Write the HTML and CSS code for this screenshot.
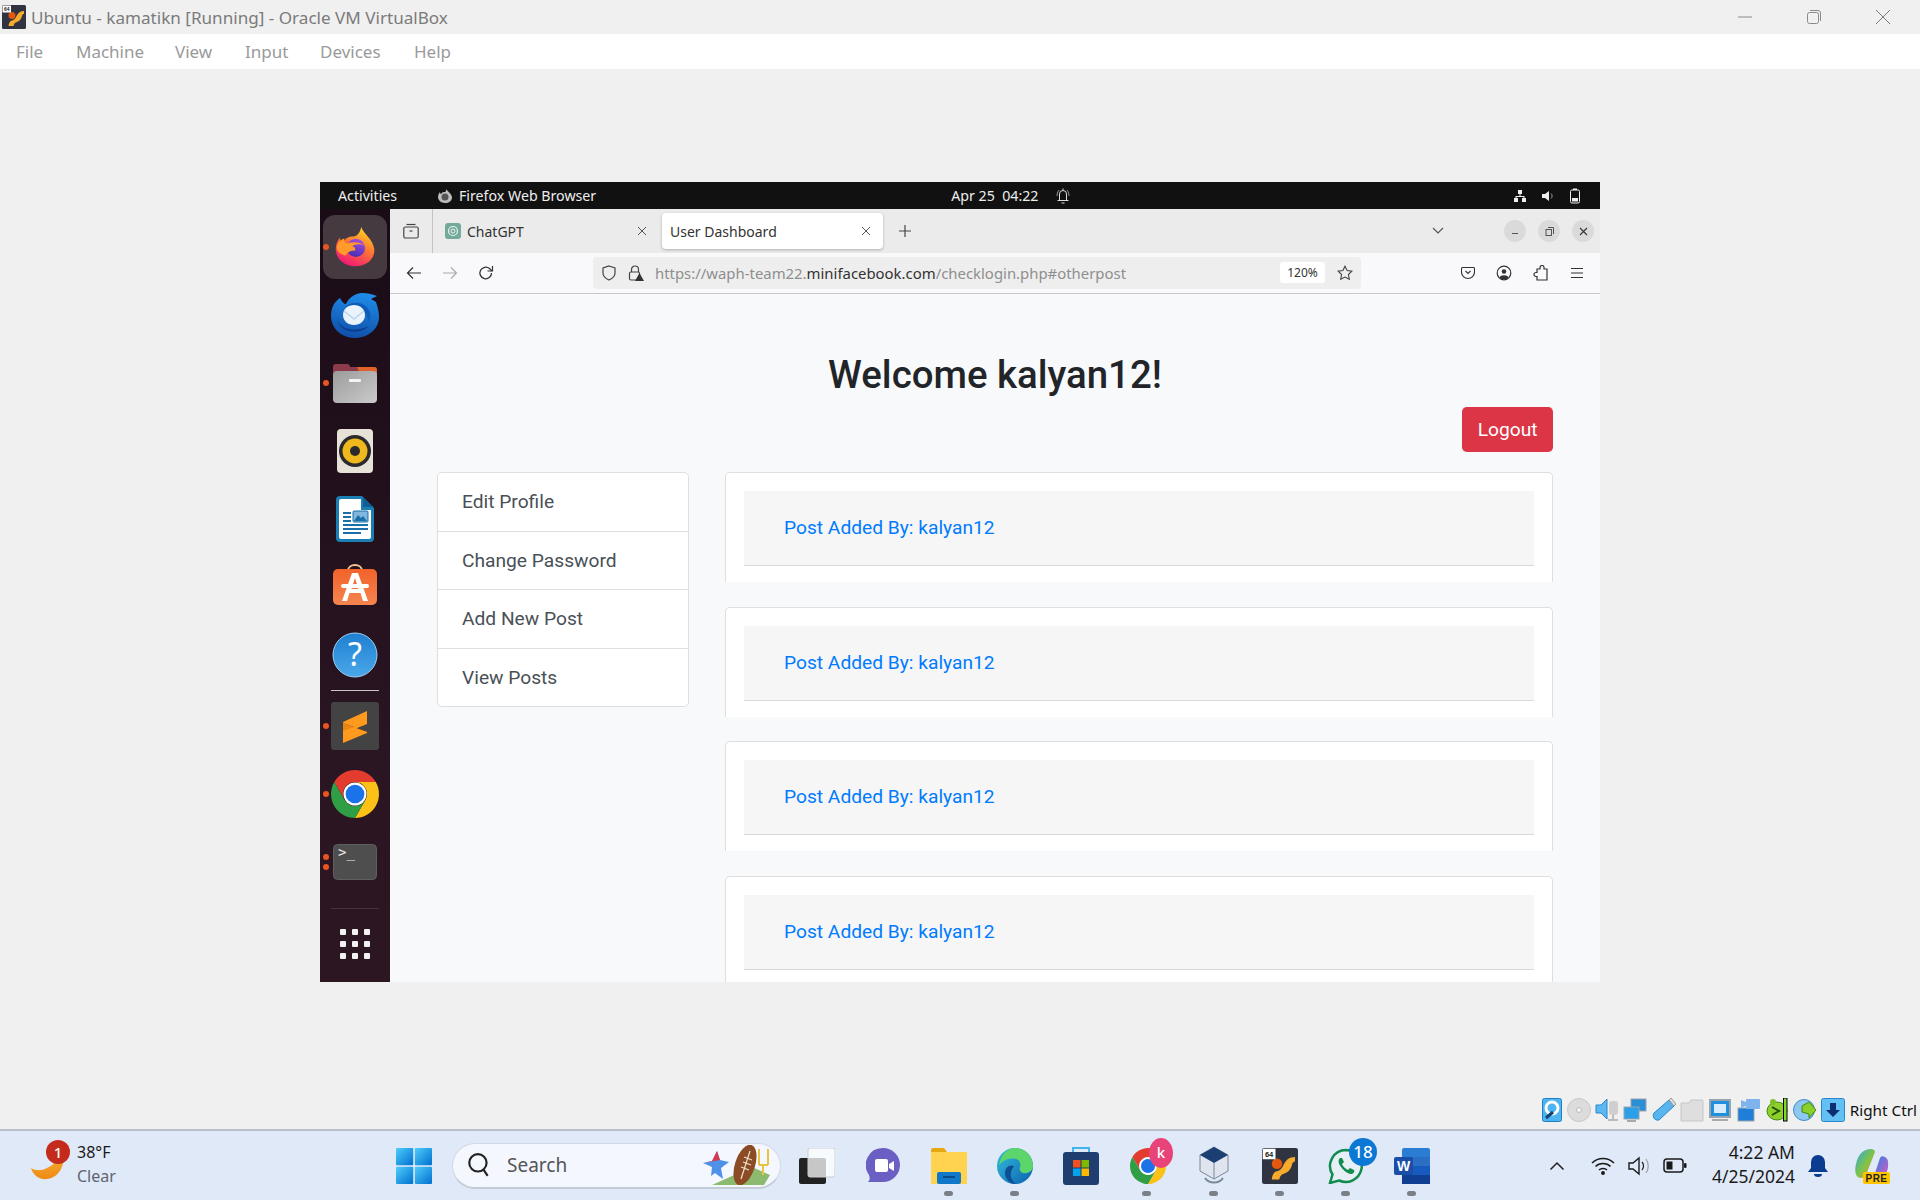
FILE: index.html
```html
<!DOCTYPE html>
<html lang="en">
<head>
  <meta charset="UTF-8">
  <title>Ubuntu - kamatikn [Running] - Oracle VM VirtualBox</title>
  <link rel="stylesheet" href="styles.css">
</head>
<body>
  <!-- shared gradients and icons -->
  <svg class="defs" aria-hidden="true">
    <defs>
      <linearGradient id="ffBody" x1="0.8" y1="0" x2="0.3" y2="1">
        <stop offset="0" stop-color="#ffe226"/><stop offset="0.45" stop-color="#ff7a2e"/><stop offset="1" stop-color="#f0147a"/>
      </linearGradient>
      <linearGradient id="ffInner" x1="0.7" y1="0" x2="0.3" y2="1">
        <stop offset="0" stop-color="#a94de0"/><stop offset="1" stop-color="#3f2db0"/>
      </linearGradient>
      <linearGradient id="tbBody" x1="0.6" y1="0" x2="0.4" y2="1">
        <stop offset="0" stop-color="#1f8ce8"/><stop offset="1" stop-color="#0f4fa8"/>
      </linearGradient>
      <linearGradient id="grayBox" x1="0" y1="0" x2="1" y2="1">
        <stop offset="0" stop-color="#9b9b9b"/><stop offset="1" stop-color="#cbcbcb"/>
      </linearGradient>
      <linearGradient id="bagOrange" x1="0" y1="0" x2="0" y2="1">
        <stop offset="0" stop-color="#f2622a"/><stop offset="1" stop-color="#f58550"/>
      </linearGradient>
      <linearGradient id="helpBlue" x1="0" y1="0" x2="0" y2="1">
        <stop offset="0" stop-color="#1f7fd0"/><stop offset="1" stop-color="#4aa8ea"/>
      </linearGradient>
      <linearGradient id="winBlue" x1="0" y1="0" x2="1" y2="1">
        <stop offset="0" stop-color="#4fcdfb"/><stop offset="1" stop-color="#0070d0"/>
      </linearGradient>
      <linearGradient id="edgeBlue" x1="0" y1="0" x2="1" y2="1">
        <stop offset="0" stop-color="#33c3dc"/><stop offset="1" stop-color="#0c5fb0"/>
      </linearGradient>
      <linearGradient id="moonGold" x1="0" y1="0" x2="0" y2="1">
        <stop offset="0" stop-color="#f8b93a"/><stop offset="1" stop-color="#ee8a16"/>
      </linearGradient>
      <linearGradient id="copilot" x1="0" y1="0" x2="1" y2="1">
        <stop offset="0" stop-color="#2aa5e8"/><stop offset="0.5" stop-color="#7cc34a"/><stop offset="1" stop-color="#e7a02f"/>
      </linearGradient>
      <linearGradient id="copilot2" x1="0" y1="0" x2="1" y2="1">
        <stop offset="0" stop-color="#2f7fe8"/><stop offset="1" stop-color="#d85bc0"/>
      </linearGradient>
      <symbol id="chrome" viewBox="4 4 40 40">
        <path fill="#e33b2e" d="M6.7 14A20 20 0 0 1 41.3 14H24a10 10 0 0 0-8.66 15Z"/>
        <path fill="#fbc116" d="M41.3 14H24a10 10 0 0 1 8.66 15L24 44A20 20 0 0 0 41.3 14Z"/>
        <path fill="#2f9e44" d="M6.7 14A20 20 0 0 0 24 44l8.66-15a10 10 0 0 1-17.32 0Z"/>
        <circle cx="24" cy="24" r="9.6" fill="#fff"/>
        <circle cx="24" cy="24" r="7.8" fill="#1a73e8"/>
      </symbol>
      <symbol id="ffox" viewBox="0 0 48 48">
        <path fill="url(#ffBody)" d="M31 1c3 8 13 13 15 25 1 12-9 20-22 20C11 46 2 37 2 26c0-5 2-10 5-13 0 3 1 5 3 6 2-4 6-7 11-7 5 0 9-4 10-11Z"/>
        <circle cx="25" cy="25" r="10.500" fill="url(#ffInner)"/>
        <path fill="#ff9a2b" d="M3 25c1-6 4-9 9-11-1 3 0 5 3 6 6-2 14-2 20 2-5-2-11-1-14 1 3 1 4 3 3 5-5 0-9 2-11 6-5-2-9-4-10-9Z"/>
      </symbol>
      <symbol id="vbox" viewBox="0 0 48 48">
        <rect width="48" height="48" rx="3" fill="#2f3440"/>
        <path fill="#f7ab2c" d="M44 12c-8 0-12 4-15 10-2 5-5 8-9 9-4 1-6 4-7 11h10c1-5 3-7 7-8 6-2 9-7 10-12 1-3 2-4 4-4Z"/>
        <circle cx="20" cy="21" r="7" fill="#e4570f"/>
        <rect x="1" y="1" width="17" height="14" fill="#fff"/>
        <text x="9.5" y="12" class="svg-64">64</text>
      </symbol>
    </defs>
  </svg>

  <header class="titlebar">
    <svg class="titlebar-icon" width="24" height="24"><use href="#vbox"/></svg>
    <span class="titlebar-text">Ubuntu - kamatikn [Running] - Oracle VM VirtualBox</span>
    <div class="winctl">
      <svg width="16" height="16" viewBox="0 0 16 16"><path d="M1 8h14" stroke="#8a8a8a"/></svg>
      <svg width="16" height="16" viewBox="0 0 16 16" fill="none" stroke="#8a8a8a"><rect x="1.5" y="3.5" width="11" height="11" rx="2"/><path d="M4 1.5h8a2.500 2.500 0 0 1 2.500 2.500v8"/></svg>
      <svg width="16" height="16" viewBox="0 0 16 16"><path d="M1 1l14 14M15 1L1 15" stroke="#7a7a7a"/></svg>
    </div>
  </header>

  <nav class="menubar">
    <span class="m-file">File</span><span class="m-machine">Machine</span><span class="m-view">View</span><span class="m-input">Input</span><span class="m-devices">Devices</span><span>Help</span>
  </nav>

  <main class="host">
    <section class="vm">
      <div class="gnome-bar">
        <span class="gnome-activities">Activities</span>
        <svg class="gnome-ff" width="16" height="16" viewBox="0 0 16 16"><path fill="#bdbdbd" d="M9 1c1 2 5 4 6 8 0 4-3 6-7 6-4 0-7-3-7-6 0-2 1-4 2-5 0 1 .5 2 1 2 1-2 3-2 4-2 1 0 1-2 1-3Z"/><circle cx="8" cy="9" r="3.500" fill="#555"/></svg>
        <span class="gnome-app">Firefox Web Browser</span>
        <span class="gnome-clock">Apr 25&nbsp; 04:22</span>
        <svg class="gnome-bell" width="14" height="16" viewBox="0 0 14 16" fill="none" stroke="#ddd"><path d="M3.500 12V6a3.500 3.500 0 0 1 7 0v6M1.500 12.500h11M5.500 15h3M7 0.500V2"/><path d="M1 8c0-2 .5-4 2-6M13 8c0-2-.5-4-2-6" stroke="#999"/></svg>
        <div class="gnome-tray">
          <svg width="14" height="14" viewBox="0 0 14 14" fill="#eee"><rect x="5" y="1" width="4" height="4"/><rect x="1" y="9" width="4" height="4"/><rect x="9" y="9" width="4" height="4"/><path d="M6.500 5h1v2H11.500v2h-1V8h-7v1h-1V7h4Z"/></svg>
          <svg width="14" height="14" viewBox="0 0 14 14" fill="#eee"><path d="M1 5h3l4-3v10L4 9H1Z"/><path d="M10 4.500c1.500 1.500 1.500 3.500 0 5" stroke="#999" fill="none"/></svg>
          <svg width="12" height="16" viewBox="0 0 12 16" fill="none"><rect x="1.500" y="2" width="9" height="13" rx="1.500" stroke="#eee"/><rect x="4" y="0.500" width="4" height="1.500" fill="#eee"/><rect x="3" y="10" width="6" height="3.500" fill="#eee"/></svg>
        </div>
      </div>

      <div class="vm-body">
        <aside class="dock">
          <div class="dock-item is-active">
            <span class="dock-dot"></span>
            <svg width="42" height="44"><use href="#ffox"/></svg>
          </div>
          <div class="dock-item">
            <svg width="48" height="46" viewBox="0 0 48 46">
              <path fill="url(#tbBody)" d="M9 6c2 4 4 6 6 6C18 5 25 1 31 1c5 0 10 1 15 3l-6 3 5 3c2 6 3 10 3 15 0 12-11 21-24 21C10 46 0 36 0 24 0 16 3 10 9 6Z"/>
              <path fill="#0c3f92" d="M6 27c3 10 17 14 32 7-9 9-29 8-32-7Z"/>
              <path fill="#0d5cb8" d="M14 15c7-6 18-6 23 2 3 4 3 9 1 14-1-9-8-16-15-17-4 0-7 0-9 1Z"/>
              <path fill="#eaf3fb" d="M12 23c0-6 5-10 11-10s11 4 11 10-5 10-11 10-11-4-11-10Z"/>
              <path fill="none" stroke="#bcd4ea" stroke-width="1.500" d="M13 19l10 8 10-8"/>
            </svg>
          </div>
          <div class="dock-item">
            <span class="dock-dot"></span>
            <svg width="44" height="40" viewBox="0 0 44 40">
              <path fill="#8d3a4b" d="M0 4a3 3 0 0 1 3-3h11a3 3 0 0 1 3 3h24a3 3 0 0 1 3 3v10H0Z"/>
              <path fill="#e2622b" d="M24 4h17a3 3 0 0 1 3 3v10H30Z"/>
              <rect y="8" width="44" height="32" rx="4" fill="url(#grayBox)"/>
              <rect x="16" y="16" width="12" height="3" rx="1" fill="#f4f4f4"/>
            </svg>
          </div>
          <div class="dock-item">
            <svg width="38" height="46" viewBox="0 0 38 46">
              <rect x="1" y="1" width="36" height="44" rx="4" fill="#e6e2d8"/>
              <circle cx="19" cy="23" r="16" fill="#2b2b2e"/>
              <circle cx="19" cy="23" r="12.500" fill="#efb81c"/>
              <circle cx="19" cy="23" r="5" fill="#2b2b2e"/>
            </svg>
          </div>
          <div class="dock-item">
            <svg width="38" height="46" viewBox="0 0 38 46">
              <path fill="#1b7fb4" d="M4 0h22l12 12v30a4 4 0 0 1-4 4H4a4 4 0 0 1-4-4V4a4 4 0 0 1 4-4Z"/>
              <path fill="#fff" d="M5 3h20v11h10v27a2 2 0 0 1-2 2H5a2 2 0 0 1-2-2V5a2 2 0 0 1 2-2Z"/>
              <path fill="#0e5f93" d="M27 1l10 10H27Z"/>
              <path stroke="#1b6fa8" stroke-width="2" d="M7 17h8M7 21h8M7 25h8M7 29h25M7 33h25M7 37h18"/>
              <rect x="17" y="15" width="15" height="11" rx="1" fill="#7fb7dd" stroke="#1b6fa8"/>
              <path fill="#1b6fa8" d="M18 25l4-6 3 3 2-2 4 5Z"/>
            </svg>
          </div>
          <div class="dock-item">
            <svg width="44" height="46" viewBox="0 0 44 46">
              <path fill="none" stroke="#f2c792" stroke-width="2" d="M15 7c0-8 14-8 14 0"/>
              <rect y="5" width="44" height="36" rx="5" fill="url(#bagOrange)"/>
              <path fill="#fff" d="M19 9h6l10 28h-5l-2.500-8H16.500L14 37H9Zm3 5-3.500 11h7Z"/>
              <rect x="8" y="20" width="28" height="4" rx="2" fill="#fff"/>
            </svg>
          </div>
          <div class="dock-item">
            <svg width="46" height="46" viewBox="0 0 46 46">
              <circle cx="23" cy="23" r="22" fill="url(#helpBlue)" stroke="#9fd0f3"/>
              <text x="23" y="34" class="svg-help">?</text>
            </svg>
          </div>
          <div class="dock-sep"></div>
          <div class="dock-item">
            <span class="dock-dot"></span>
            <svg width="48" height="48" viewBox="0 0 48 48">
              <rect width="48" height="48" rx="3" fill="#434343"/>
              <path fill="#e8860f" d="M12 21l24 9v1L12 29Z"/>
              <path fill="#ff9a1f" d="M12 20 36 9V22L25 26.500 36 30V31L12 41V29L23 25 12 21Z"/>
            </svg>
          </div>
          <div class="dock-item">
            <span class="dock-dot"></span>
            <svg width="48" height="48"><use href="#chrome"/></svg>
          </div>
          <div class="dock-item">
            <span class="dock-dot dock-dot-a"></span><span class="dock-dot dock-dot-b"></span>
            <svg width="44" height="36" viewBox="0 0 44 36">
              <rect x=".5" y=".5" width="43" height="35" rx="4" fill="#4e4e4e" stroke="#5f5f5f"/>
              <text x="5" y="13" class="svg-term">&gt;_</text>
            </svg>
          </div>
          <div class="dock-sep dock-sep-dim"></div>
          <div class="dock-item">
            <div class="apps-grid"><i></i><i></i><i></i><i></i><i></i><i></i><i></i><i></i><i></i></div>
          </div>
        </aside>

        <div class="firefox">
          <div class="tabbar">
            <div class="ff-view">
              <svg width="16" height="16" viewBox="0 0 16 16" fill="none" stroke="#444" stroke-width="1.200"><path d="M3.500 1.500h9"/><rect x="0.800" y="4" width="14.400" height="11" rx="1.500"/><path d="M6.500 8h3"/></svg>
            </div>
            <div class="tab">
              <svg class="tab-favicon" width="16" height="16" viewBox="0 0 16 16"><rect width="16" height="16" rx="3" fill="#74aa9c"/><circle cx="8" cy="8" r="4.500" fill="none" stroke="#e9f3f0" stroke-width="1.200"/><circle cx="8" cy="8" r="2" fill="none" stroke="#e9f3f0"/></svg>
              <span class="tab-title">ChatGPT</span>
              <svg class="tab-close" width="10" height="10" viewBox="0 0 10 10"><path d="M1 1l8 8M9 1L1 9" stroke="#555"/></svg>
            </div>
            <div class="tab tab-active">
              <span class="tab-title">User Dashboard</span>
              <svg class="tab-close" width="10" height="10" viewBox="0 0 10 10"><path d="M1 1l8 8M9 1L1 9" stroke="#555"/></svg>
            </div>
            <svg class="tab-new" width="12" height="12" viewBox="0 0 12 12"><path d="M6 0v12M0 6h12" stroke="#444" stroke-width="1.200"/></svg>
            <svg class="tab-list" width="12" height="8" viewBox="0 0 12 8"><path d="M1 1l5 5 5-5" fill="none" stroke="#555" stroke-width="1.200"/></svg>
            <div class="csd">
              <span><svg width="8" height="8" viewBox="0 0 8 8"><path d="M1 6.500h6" stroke="#555"/></svg></span>
              <span><svg width="9" height="9" viewBox="0 0 9 9" fill="none" stroke="#555"><rect x="1" y="2.500" width="5.500" height="6"/><path d="M3 .500h5.500V7"/></svg></span>
              <span><svg width="9" height="9" viewBox="0 0 9 9"><path d="M1 1l7 7M8 1L1 8" stroke="#333" stroke-width="1.100"/></svg></span>
            </div>
          </div>

          <div class="toolbar">
            <svg class="tb-back" width="16" height="16" viewBox="0 0 16 16" fill="none" stroke="#333" stroke-width="1.200"><path d="M15 8H1.500M7 2.500 1.500 8 7 13.500"/></svg>
            <svg class="tb-fwd" width="16" height="16" viewBox="0 0 16 16" fill="none" stroke="#aaa" stroke-width="1.200"><path d="M1 8h13.500M9 2.500 14.500 8 9 13.500"/></svg>
            <svg class="tb-reload" width="16" height="16" viewBox="0 0 16 16" fill="none" stroke="#333" stroke-width="1.300"><path d="M13.500 8a5.800 5.800 0 1 1-2-4.400L14 6"/><path d="M14.500 1v5h-5" stroke-width="1.200"/></svg>
            <div class="urlbar">
              <svg width="16" height="16" viewBox="0 0 16 16" fill="none" stroke="#444" stroke-width="1.200"><path d="M8 1l6 2v5c0 3-2.500 5.500-6 7-3.500-1.500-6-4-6-7V3Z"/></svg>
              <svg class="url-lock" width="16" height="16" viewBox="0 0 16 16"><path d="M3.500 7V4.500a3.500 3.500 0 0 1 7 0V7" fill="none" stroke="#444" stroke-width="1.200"/><rect x="1.500" y="7" width="10" height="8" rx="1.500" fill="none" stroke="#444" stroke-width="1.200"/><path d="M11.500 8l4.500 8H7Z" fill="#333"/></svg>
              <span class="url-text">https://waph-team22.<b>minifacebook.com</b>/checklogin.php#otherpost</span>
              <span class="url-zoom">120%</span>
              <svg class="url-star" width="16" height="16" viewBox="0 0 16 16"><path d="M8 1.200l2.100 4.400 4.700.6-3.400 3.300.9 4.800L8 12l-4.300 2.300.9-4.800L1.200 6.200l4.700-.6Z" fill="none" stroke="#444" stroke-width="1.100"/></svg>
            </div>
            <div class="tb-right">
              <svg width="14" height="14" viewBox="0 0 14 14" fill="none" stroke="#333" stroke-width="1.100"><path d="M1.500 1.500h11a1 1 0 0 1 1 1V6a6.500 6.500 0 0 1-13 0V2.500a1 1 0 0 1 1-1Z"/><path d="M4.500 5 7 7.500 9.500 5"/></svg>
              <svg width="16" height="16" viewBox="0 0 16 16"><circle cx="8" cy="8" r="6.800" fill="none" stroke="#333" stroke-width="1.200"/><circle cx="8" cy="6.500" r="2.300" fill="#333"/><path d="M3.500 12.500c1-3 8-3 9 0a6 6 0 0 1-9 0Z" fill="#333"/></svg>
              <svg width="16" height="16" viewBox="0 0 16 16" fill="none" stroke="#333" stroke-width="1.200"><path d="M7 4V2.500a2 2 0 0 1 4 0V4h3v11H4v-3.500H3a2 2 0 0 1 0-4h1V4Z"/></svg>
              <svg width="14" height="12" viewBox="0 0 14 12"><path d="M1 1.500h12M1 6h12M1 10.500h12" stroke="#333" stroke-width="1.200"/></svg>
            </div>
          </div>

          <div class="dashboard">
            <h1 class="welcome">Welcome kalyan12!</h1>
            <div class="logout-row"><a class="btn-logout">Logout</a></div>
            <div class="dash-row">
              <ul class="side-list">
                <li>Edit Profile</li>
                <li>Change Password</li>
                <li>Add New Post</li>
                <li>View Posts</li>
              </ul>
              <div class="posts">
                <article class="post"><div class="post-header">Post Added By: kalyan12</div></article>
                <article class="post"><div class="post-header">Post Added By: kalyan12</div></article>
                <article class="post"><div class="post-header">Post Added By: kalyan12</div></article>
                <article class="post"><div class="post-header">Post Added By: kalyan12</div></article>
              </div>
            </div>
          </div>
        </div>
      </div>
    </section>

    <div class="statusbar">
      <svg width="20" height="24" viewBox="0 0 20 24"><rect x=".5" y=".5" width="19" height="23" rx="2" fill="#4db5ef" stroke="#1f7fc8"/><circle cx="10" cy="10" r="6" fill="none" stroke="#fff" stroke-width="3"/><path d="M4 20l7-6" stroke="#16406f" stroke-width="3"/></svg>
      <svg width="24" height="24" viewBox="0 0 24 24"><circle cx="12" cy="12" r="11.500" fill="#dcdcdc" stroke="#c8c8c8"/><circle cx="12" cy="12" r="2.500" fill="#f4f4f4" stroke="#bbb"/></svg>
      <svg width="24" height="24" viewBox="0 0 24 24"><path d="M1 7h5l6-6v20l-6-6H1Z" fill="#5cb8f0" stroke="#2a86c9"/><rect x="14" y="3" width="9" height="14" rx="3" fill="#cfcfcf"/><path d="M18 17v4M13 22h10" stroke="#bbb" stroke-width="2"/></svg>
      <svg width="24" height="24" viewBox="0 0 24 24"><rect x="8" y="1" width="15" height="12" fill="#2b8fd8" stroke="#9aa4ad"/><rect x="1" y="9" width="15" height="12" fill="#2b9fe8" stroke="#9aa4ad"/><path d="M4 23h9" stroke="#aaa" stroke-width="2"/></svg>
      <svg width="24" height="24" viewBox="0 0 24 24"><path d="M17 2 2 15c-2 3 0 8 5 7L22 8Z" fill="#58b5ee" stroke="#2a86c9"/><path d="M17 2l5 6 2-2-5-6Z" fill="#ddd" stroke="#999"/></svg>
      <svg width="24" height="24" viewBox="0 0 24 24"><path d="M1 23V5h8l2-3h11a1 1 0 0 1 1 1v20Z" fill="#dedede" stroke="#c6c6c6"/></svg>
      <svg width="24" height="24" viewBox="0 0 24 24"><rect x="1" y="1" width="22" height="19" fill="#99a4ad"/><rect x="3" y="3" width="18" height="15" fill="#1f8fde"/><rect x="6" y="6" width="12" height="9" fill="#d4ecfb"/><path d="M4 22h16" stroke="#aaa" stroke-width="2"/></svg>
      <svg width="24" height="24" viewBox="0 0 24 24"><rect x="1" y="10" width="16" height="13" fill="#1f7fd8" stroke="#99a4ad"/><rect x="9" y="1" width="14" height="10" rx="1" fill="#7eb3ee"/><path d="M9 4 4 2v8l5-2Z" fill="#7eb3ee"/></svg>
      <svg width="24" height="24" viewBox="0 0 24 24"><ellipse cx="12" cy="13" rx="10" ry="9" fill="#8fcf2a" stroke="#3f8a14"/><circle cx="8" cy="4" r="3" fill="#7fbf26"/><path d="M7 9l7 4-7 4" fill="none" stroke="#1f4f0a" stroke-width="2"/><rect x="18.500" y="0" width="3.500" height="23" fill="#82d82a" stroke="#000"/></svg>
      <svg width="24" height="24" viewBox="0 0 24 24"><circle cx="11" cy="12" r="10.500" fill="#8ec8ef" stroke="#3f8cc8"/><path d="M9 8l7-4 7 8-7 8v-4l-7-2Z" fill="#8bd02a" stroke="#3f8a14"/></svg>
      <svg width="24" height="24" viewBox="0 0 24 24"><rect x=".5" y=".5" width="23" height="23" rx="2" fill="#62c0f5" stroke="#2a86c9"/><path d="M9 5h6v7h4l-7 7-7-7h4Z" fill="#0e2f6f"/></svg>
      <span class="status-key">Right Ctrl</span>
    </div>
  </main>

  <footer class="taskbar">
    <div class="weather">
      <svg class="weather-icon" width="36" height="38" viewBox="0 0 36 38">
        <path fill="url(#moonGold)" d="M33 0c3 14-1 30-16 32C9 33 3 28 1 21c5 3 10 3 16 0C26 17 32 9 33 0Z"/>
        <circle cx="28" cy="5" r="12" fill="#c42b1c"/>
        <text x="28" y="11" class="svg-badge">1</text>
      </svg>
      <div class="weather-text"><span>38°F</span><span class="weather-sub">Clear</span></div>
    </div>

    <svg class="win-logo" width="36" height="36" viewBox="0 0 36 36"><rect width="17.200" height="17.200" rx="1" fill="url(#winBlue)"/><rect x="18.800" width="17.200" height="17.200" rx="1" fill="url(#winBlue)"/><rect y="18.800" width="17.200" height="17.200" rx="1" fill="url(#winBlue)"/><rect x="18.800" y="18.800" width="17.200" height="17.200" rx="1" fill="url(#winBlue)"/></svg>

    <div class="searchbox">
      <svg width="24" height="26" viewBox="0 0 22 24" fill="none" stroke="#222" stroke-width="2"><circle cx="10" cy="10" r="8"/><path d="M15 16l4 6"/></svg>
      <span class="search-label">Search</span>
      <svg class="search-art" width="74" height="40" viewBox="0 0 74 40">
        <path d="M1 18 10 16 15 6l3 9 9 2-8 6 2 11-8-6-4 3 1-9Z" fill="#4f90e8"/>
        <path d="M1 18 10 16 15 6l3 9Z" fill="#d5394a"/>
        <path d="M10 40 50 22l18 8-6 10Z" fill="#8cbb6f"/>
        <path d="M57 4v16M66 4v16M57 20h9M61 20v10" stroke="#e7c33f" stroke-width="2" fill="none"/>
        <ellipse cx="43" cy="20" rx="10" ry="21" transform="rotate(18 43 20)" fill="#8a4b25"/>
        <path d="M48 6 39 34M42 12l8 3M41 17l8 3M39 22l8 3" stroke="#f0e2cf" stroke-width="1.200"/>
      </svg>
    </div>

    <div class="task-icons">
      <div class="task-item">
        <svg width="36" height="36" viewBox="0 0 36 36"><rect y="10" width="27" height="26" rx="2" fill="#222"/><rect x="9" width="27" height="29" rx="2" fill="#fff" fill-opacity="0.75" stroke="#ccc"/></svg>
      </div>
      <div class="task-item">
        <svg width="34" height="36" viewBox="0 0 34 36"><path fill="#6b5fc4" d="M17 0a17 17 0 0 1 0 34H2c2-2 2-4 1-7A17 17 0 0 1 17 0Z"/><rect x="9" y="11" width="13" height="13" rx="2" fill="#fff"/><path d="M23 16l5-3v10l-5-3Z" fill="#fff"/></svg>
      </div>
      <div class="task-item has-pip">
        <svg width="36" height="36" viewBox="0 0 36 36"><path fill="#e3a90f" d="M0 2a2 2 0 0 1 2-2h11l3 4h20v10H0Z"/><rect y="4" width="36" height="32" fill="#ffd250"/><rect x="6" y="24" width="24" height="12" rx="2" fill="#0f78c8"/><rect x="12" y="28" width="12" height="2" fill="#0a4a8a"/></svg>
      </div>
      <div class="task-item has-pip">
        <svg width="36" height="36" viewBox="0 0 36 36"><circle cx="18" cy="18" r="18" fill="url(#edgeBlue)"/><path fill="#5cd66a" d="M36 18c0 5-5 8-10 7-3-1-4-4-3-6 1-3 0-7-4-8-7-2-14 2-17 6C4 7 10 0 18 0c10 0 18 8 18 18Z"/><path fill="#0d4f96" d="M17 18c-4-2-9 1-9 7 0 6 5 11 11 11-4-3-6-8-5-11 0-3 2-5 3-7Z"/></svg>
      </div>
      <div class="task-item">
        <svg width="36" height="38" viewBox="0 0 36 38"><path d="M10 7V1h16v6" fill="none" stroke="#3fb5ea" stroke-width="2"/><rect y="5" width="36" height="33" rx="3" fill="#1f3d6e"/><rect x="10" y="13" width="7.500" height="7.500" fill="#f25022"/><rect x="18.500" y="13" width="7.500" height="7.500" fill="#7fba00"/><rect x="10" y="21.500" width="7.500" height="7.500" fill="#00a4ef"/><rect x="18.500" y="21.500" width="7.500" height="7.500" fill="#ffb900"/></svg>
      </div>
      <div class="task-item has-pip">
        <svg width="36" height="36"><use href="#chrome"/></svg>
        <svg class="task-badge" width="24" height="30" viewBox="0 0 24 30"><ellipse cx="12" cy="15" rx="12" ry="15" fill="#e8447a"/><text x="12" y="20" class="svg-badge">k</text></svg>
      </div>
      <div class="task-item has-pip">
        <svg width="32" height="40" viewBox="0 0 32 40"><path d="M16 1 30 9v16l-14 8L2 25V9Z" fill="#dfe5ee" stroke="#7a8699"/><path d="M16 1 30 9l-14 8L2 9Z" fill="#1c3f73"/><path d="M16 17v16" stroke="#7a8699"/><path d="M7 32c4 6 14 6 18 0" fill="none" stroke="#7a8699" stroke-width="2"/></svg>
      </div>
      <div class="task-item has-pip">
        <svg width="36" height="36"><use href="#vbox"/></svg>
      </div>
      <div class="task-item has-pip">
        <svg width="36" height="36" viewBox="0 0 36 36"><path d="M18 2a16 16 0 0 0-13.500 24.500L2 35l9-2.500A16 16 0 1 0 18 2Z" fill="#e6eef6" stroke="#128c4e" stroke-width="2.500"/><path d="M12 10c-2 2-2 5 1 9s7 7 10 7c2 0 4-2 3-4l-4-2-2 2c-2-1-5-3-6-6l2-2-2-4Z" fill="#128c4e"/></svg>
        <svg class="task-badge task-badge-wa" width="28" height="28" viewBox="0 0 28 28"><circle cx="14" cy="14" r="14" fill="#0a78d4"/><text x="14" y="20" class="svg-badge svg-badge-lg">18</text></svg>
      </div>
      <div class="task-item has-pip">
        <svg width="36" height="36" viewBox="0 0 36 36"><rect x="8" y="0" width="28" height="36" rx="2" fill="#2b7cd3"/><rect x="8" y="9" width="28" height="9" fill="#2b6fc4"/><rect x="8" y="18" width="28" height="9" fill="#185abd"/><rect x="8" y="27" width="28" height="9" fill="#103f91"/><rect x="0" y="9" width="19" height="18" rx="2" fill="#1a4ea8"/><text x="9.500" y="23" class="svg-word">W</text></svg>
      </div>
    </div>

    <div class="tray">
      <svg class="tray-chevron" width="16" height="10" viewBox="0 0 16 10"><path d="M1.500 8.500 8 2l6.500 6.500" fill="none" stroke="#222" stroke-width="1.500"/></svg>
      <svg class="tray-wifi" width="24" height="18" viewBox="0 0 24 18" fill="none" stroke="#1a1a1a" stroke-width="1.500"><path d="M1 6c6-6 16-6 22 0M4.500 9.500c4-4 11-4 15 0M8 13c2-2 6-2 8 0"/><circle cx="12" cy="16" r="1.200" fill="#1a1a1a"/></svg>
      <svg class="tray-vol" width="24" height="20" viewBox="0 0 24 20" fill="none"><path d="M1 7h4l6-5v16l-6-5H1Z" stroke="#1a1a1a" stroke-width="1.400"/><path d="M14 6c2 2 2 6 0 8" stroke="#1a1a1a" stroke-width="1.200"/><path d="M18 3c3 4 3 10 0 14" stroke="#9aa0a8" stroke-width="1.200"/></svg>
      <svg class="tray-bat" width="24" height="15" viewBox="0 0 24 15"><rect x="1" y="1" width="19" height="13" rx="3" fill="none" stroke="#1a1a1a" stroke-width="1.500"/><rect x="3.500" y="3.500" width="6" height="8" fill="#1a1a1a"/><rect x="21" y="5" width="2.500" height="5" rx="1" fill="#1a1a1a"/></svg>
      <div class="tray-clock"><span>4:22 AM</span><span>4/25/2024</span></div>
      <svg class="tray-bell" width="20" height="24" viewBox="0 0 20 24"><path d="M10 1a7 7 0 0 0-7 7v6l-3 4h20l-3-4V8a7 7 0 0 0-7-7Z" fill="#0a3d91"/><path d="M6 20a4 3 0 0 0 8 0Z" fill="#0a3d91"/></svg>
      <svg class="tray-copilot" width="36" height="36" viewBox="0 0 36 36">
        <path fill="url(#copilot)" d="M2 16C4 6 10 1 17 1c2 0 4 1 4 3L12 27c-1 2-3 3-5 3C2 30 0 24 2 16Z"/>
        <path fill="url(#copilot2)" d="M34 14c1 8-2 15-10 15-3 0-4-2-3-4l5-15c1-2 3-2 5-1 2 1 3 3 3 5Z"/>
        <rect x="9" y="24" width="27" height="12" rx="2" fill="#ffc400"/>
        <text x="22.500" y="33.500" class="svg-pre">PRE</text>
      </svg>
    </div>
  </footer>
</body>
</html>
```

FILE: styles.css
```css
* {
  box-sizing: border-box;
}

html, body {
  margin: 0;
  padding: 0;
  height: 1200px;
  overflow: hidden;
}

body {
  display: flex;
  flex-direction: column;
  background: #f0f0f0;
  font-family: "Noto Sans", sans-serif;
}

svg {
  display: block;
  flex: none;
}

.defs {
  width: 0;
  height: 0;
}

/* VirtualBox window */
.titlebar {
  height: 34px;
  display: flex;
  align-items: center;
  padding-left: 2px;
  background: #f0f0f0;
  color: #7b7b7b;
  font-size: 17.100px;
}

.titlebar-text {
  margin-left: 5px;
}

.winctl {
  margin-left: auto;
  display: flex;
  gap: 53px;
  padding-right: 29px;
}

.menubar {
  height: 35px;
  display: flex;
  align-items: center;
  padding-left: 16px;
  background: #fff;
  color: #9a9a9a;
  font-size: 17px;
}

.m-file { width: 60px; }
.m-machine { width: 99px; }
.m-view { width: 70px; }
.m-input { width: 75px; }
.m-devices { width: 94px; }

.host {
  flex: 1;
  display: flex;
  flex-direction: column;
  padding: 113px 3px 7px 320px;
}

.vm {
  width: 1280px;
  height: 800px;
  display: flex;
  flex-direction: column;
}

.statusbar {
  margin-top: auto;
  align-self: flex-end;
  height: 24px;
  display: flex;
  align-items: center;
  gap: 4.300px;
}

.status-key {
  color: #111;
  font-size: 15.300px;
  white-space: nowrap;
}

/* GNOME top bar */
.gnome-bar {
  height: 27px;
  display: flex;
  align-items: center;
  background: #111;
  color: #eee;
  font-size: 14.200px;
  padding-left: 18px;
}

.gnome-activities { width: 99px; }
.gnome-app { margin-left: 6px; }
.gnome-clock { margin-left: 355px; }
.gnome-bell { margin-left: 18px; }

.gnome-tray {
  margin-left: auto;
  display: flex;
  align-items: center;
  gap: 14px;
  padding-right: 19px;
}

.vm-body {
  flex: 1;
  display: flex;
  min-height: 0;
}

/* Dock */
.dock {
  width: 70px;
  flex: none;
  display: flex;
  flex-direction: column;
  padding-top: 4px;
  background: linear-gradient(180deg, #190c17 0%, #2a1522 70%, #2c1622 100%);
}

.dock-item {
  position: relative;
  height: 68px;
  flex: none;
  display: flex;
  align-items: center;
  justify-content: center;
}

.is-active::before {
  content: "";
  position: absolute;
  left: 3px;
  right: 3px;
  top: 2px;
  bottom: 2px;
  background: #453a40;
  border-radius: 12px;
}

.is-active svg {
  position: relative;
}

.dock-dot {
  position: absolute;
  left: 3px;
  top: 31px;
  width: 6px;
  height: 6px;
  border-radius: 50%;
  background: #e95420;
  z-index: 1;
}

.dock-dot-a { top: 26px; }
.dock-dot-b { top: 36px; }

.dock-sep {
  height: 1px;
  margin: 1px 11px;
  background: #c9c4c7;
  flex: none;
}

.dock-sep-dim {
  margin-top: 12px;
  margin-bottom: 1px;
  background: #46333f;
}

.apps-grid {
  display: grid;
  grid-template-columns: repeat(3, 6px);
  gap: 6px;
}

.apps-grid i {
  height: 6px;
  background: #f2f2f2;
  border-radius: 1px;
}

/* Firefox chrome */
.firefox {
  flex: 1;
  min-width: 0;
  display: flex;
  flex-direction: column;
}

.tabbar {
  height: 44px;
  flex: none;
  display: flex;
  align-items: center;
  background: #ebebeb;
  color: #333;
  font-size: 14px;
}

.ff-view {
  width: 43px;
  height: 44px;
  display: flex;
  align-items: center;
  justify-content: center;
  border-right: 1px solid #c4c4c4;
}

.tab {
  width: 213px;
  height: 36px;
  margin-left: 8px;
  display: flex;
  align-items: center;
  padding: 0 7px 0 4px;
}

.tab-favicon {
  margin-right: 6px;
}

.tab-close {
  margin-left: auto;
}

.tab-active {
  width: 221px;
  padding: 0 12px 0 8px;
  background: #fff;
  border-radius: 4px;
  box-shadow: 0 1px 3px rgba(0, 0, 0, 0.25);
}

.tab-new {
  margin-left: 16px;
}

.tab-list {
  margin-left: 521px;
}

.csd {
  margin-left: auto;
  display: flex;
  gap: 12px;
  padding-right: 6px;
}

.csd span {
  width: 22px;
  height: 22px;
  display: flex;
  align-items: center;
  justify-content: center;
  border-radius: 50%;
  background: #dadada;
}

.toolbar {
  height: 41px;
  flex: none;
  display: flex;
  align-items: center;
  padding: 0 0 1px 16px;
  background: #f9f9fb;
  border-bottom: 1px solid #c8c8cc;
}

.tb-fwd, .tb-reload {
  margin-left: 20px;
}

.urlbar {
  width: 768px;
  height: 32px;
  margin-left: 99px;
  display: flex;
  align-items: center;
  padding-left: 8px;
  background: #eeeeee;
  border-radius: 4px;
  font-size: 14.900px;
  color: #8e8e8e;
}

.url-lock {
  margin-left: 11px;
}

.url-text {
  margin-left: 11px;
  white-space: nowrap;
}

.url-text b {
  font-weight: 400;
  color: #333;
}

.url-zoom {
  width: 45px;
  height: 21px;
  margin-left: auto;
  display: flex;
  align-items: center;
  justify-content: center;
  background: #fff;
  border-radius: 3px;
  font-size: 12px;
  color: #333;
}

.url-star {
  margin: 0 8px 0 12px;
}

.tb-right {
  margin-left: 100px;
  display: flex;
  align-items: center;
  gap: 21px;
}

/* Dashboard page */
.dashboard {
  flex: 1;
  min-height: 0;
  overflow: hidden;
  padding: 52px 47px 0 47px;
  background: #f8f9fa;
  font-family: Roboto, sans-serif;
}

.welcome {
  margin: 0;
  height: 58px;
  line-height: 58px;
  text-align: center;
  font-size: 38.400px;
  font-weight: 500;
  color: #212529;
}

.logout-row {
  display: flex;
  justify-content: flex-end;
  margin-top: 3px;
}

.btn-logout {
  height: 45px;
  padding: 0 15.500px;
  display: flex;
  align-items: center;
  background: #dc3545;
  border-radius: 4.800px;
  color: #fff;
  font-size: 19.200px;
}

.dash-row {
  display: flex;
  margin-top: 20px;
}

.side-list {
  width: 252px;
  flex: none;
  margin: 0;
  padding: 0;
  align-self: flex-start;
  list-style: none;
  background: #fff;
  border: 1px solid #dfdfdf;
  border-radius: 4.800px;
  color: #495057;
  font-size: 19.200px;
  line-height: 28.800px;
}

.side-list li {
  padding: 15px 24px 13.800px;
}

.side-list li + li {
  border-top: 1px solid #dfdfdf;
}

.posts {
  flex: 1;
  margin-left: 36px;
  display: flex;
  flex-direction: column;
  gap: 24.700px;
}

.post {
  height: 110px;
  flex: none;
  padding: 18px 18px 0;
  background: #fff;
  border: 1px solid #dfdfdf;
  border-bottom: 0;
  border-radius: 4.800px 4.800px 0 0;
}

.post-header {
  height: 75px;
  padding: 23px 40px 0;
  background: #f6f6f6;
  border-bottom: 1px solid #d8d8d8;
  color: #007bff;
  font-size: 19.200px;
  line-height: 28.800px;
}

/* Windows taskbar */
.taskbar {
  height: 71px;
  flex: none;
  display: flex;
  align-items: center;
  background: #e0e9f8;
  border-top: 2px solid #b8c0cc;
  color: #1a1a1a;
}

.weather {
  width: 396px;
  display: flex;
  align-items: center;
  padding-left: 30px;
}

.weather-icon {
  overflow: visible;
}

.weather-text {
  margin: 0 0 4px 11px;
  display: flex;
  flex-direction: column;
  font-size: 16px;
  line-height: 24px;
}

.weather-sub {
  color: #5f6570;
}

.searchbox {
  width: 329px;
  height: 46px;
  margin-left: 20px;
  display: flex;
  align-items: center;
  padding: 0 4px 0 14px;
  background: #f4f7fe;
  border: 1px solid #d3d9e4;
  border-bottom: 2px solid #c4cbd8;
  border-radius: 23px;
}

.search-label {
  margin-left: 16px;
  color: #555;
  font-size: 19px;
}

.search-art {
  margin-left: auto;
}

.task-icons {
  margin-left: 3px;
  display: flex;
}

.task-item {
  position: relative;
  width: 66.100px;
  height: 52px;
  display: flex;
  align-items: center;
  justify-content: center;
}

.has-pip::after {
  content: "";
  position: absolute;
  left: 28px;
  bottom: -4px;
  width: 9px;
  height: 5px;
  border-radius: 3px;
  background: #7b7f87;
}

.task-badge {
  position: absolute;
  left: 35px;
  top: -2px;
}

.task-badge-wa {
  left: 36px;
  top: -2px;
}

.tray {
  margin-left: auto;
  display: flex;
  align-items: center;
  padding-right: 30px;
}

.tray-wifi { margin-left: 26px; }
.tray-vol { margin-left: 13px; }
.tray-bat { margin-left: 11px; }

.tray-clock {
  width: 108px;
  margin-bottom: 4px;
  display: flex;
  flex-direction: column;
  align-items: flex-end;
  font-size: 17.500px;
  line-height: 24px;
}

.tray-bell { margin-left: 13px; }
.tray-copilot { margin-left: 26px; }

/* text inside svg icons */
.svg-64 {
  font: 700 10px "Liberation Sans", sans-serif;
  text-anchor: middle;
  fill: #222;
}

.svg-help {
  font: 400 32px "Noto Sans", sans-serif;
  text-anchor: middle;
  fill: #fff;
}

.svg-term {
  font: 400 14px "DejaVu Sans Mono", monospace;
  fill: #eee;
}

.svg-badge {
  font: 500 15px "Noto Sans", sans-serif;
  text-anchor: middle;
  fill: #fff;
}

.svg-badge-lg {
  font-size: 17px;
}

.svg-word {
  font: 700 14px "Liberation Sans", sans-serif;
  text-anchor: middle;
  fill: #fff;
}

.svg-pre {
  font: 700 10px "Liberation Sans", sans-serif;
  text-anchor: middle;
  fill: #222;
  letter-spacing: 0.5px;
}
```
